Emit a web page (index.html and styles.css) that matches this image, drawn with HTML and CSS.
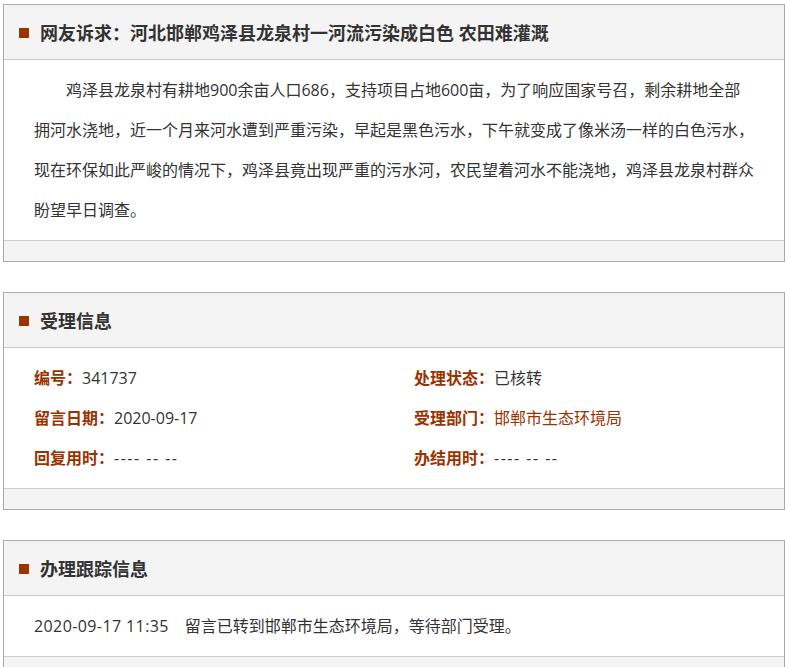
FILE: index.html
```html
<!DOCTYPE html>
<html lang="zh-CN">
<head>
<meta charset="utf-8">
<title>网友诉求</title>
<link rel="stylesheet" href="styles.css">
</head>
<body>
<div class="page">
  <section class="panel">
    <div class="panel-head"><span class="mark"></span><h2>网友诉求：河北邯郸鸡泽县龙泉村一河流污染成白色 农田难灌溉</h2></div>
    <div class="panel-body">
      <p class="content">鸡泽县龙泉村有耕地900余亩人口686，支持项目占地600亩，为了响应国家号召，剩余耕地全部拥河水浇地，近一个月来河水遭到严重污染，早起是黑色污水，下午就变成了像米汤一样的白色污水，现在环保如此严峻的情况下，鸡泽县竟出现严重的污水河，农民望着河水不能浇地，鸡泽县龙泉村群众盼望早日调查。</p>
    </div>
    <div class="panel-foot"></div>
  </section>

  <section class="panel">
    <div class="panel-head"><span class="mark"></span><h2>受理信息</h2></div>
    <div class="panel-body">
      <ul class="info">
        <li><span class="label">编号：</span>341737</li>
        <li><span class="label">处理状态：</span>已核转</li>
        <li><span class="label">留言日期：</span>2020-09-17</li>
        <li><span class="label">受理部门：</span><a class="dept" href="#">邯郸市生态环境局</a></li>
        <li><span class="label">回复用时：</span><span class="empty">---- -- --</span></li>
        <li><span class="label">办结用时：</span><span class="empty">---- -- --</span></li>
      </ul>
    </div>
    <div class="panel-foot"></div>
  </section>

  <section class="panel">
    <div class="panel-head"><span class="mark"></span><h2>办理跟踪信息</h2></div>
    <div class="panel-body">
      <div class="track"><span class="time">2020-09-17 11:35</span>留言已转到邯郸市生态环境局，等待部门受理。</div>
    </div>
    <div class="panel-foot"></div>
  </section>
</div>
</body>
</html>
```

FILE: styles.css
```css
* {
  box-sizing: border-box;
}

html, body {
  margin: 0;
  padding: 0;
  background: #fff;
}

body {
  font-family: "Open Sans", "Noto Sans CJK SC", sans-serif;
  font-size: 16px;
  color: #333;
}

.page {
  width: 782px;
  margin: 4px 0 0 3px;
  display: flex;
  flex-direction: column;
  gap: 30px;
}

.panel {
  border: 1px solid #aaa;
  background: #fff;
}

.panel-head {
  height: 55px;
  background: #f4f4f4;
  border-bottom: 1px solid #ccc;
  display: flex;
  align-items: center;
  padding-left: 15px;
  padding-top: 1px;
}

.mark {
  width: 10px;
  height: 10px;
  background: #993300;
  margin-right: 11px;
  flex: none;
}

.panel-head h2 {
  margin: 0;
  font-size: 18px;
  font-weight: bold;
  color: #333;
  line-height: 24px;
}

.panel-body {
  padding: 10px 28px 10px 30px;
}

.content {
  margin: 0;
  width: 721px;
  line-height: 40px;
  text-indent: 2em;
}

.info {
  list-style: none;
  margin: 0;
  padding: 0;
  display: grid;
  grid-template-columns: 380px 1fr;
}

.info li {
  line-height: 40px;
  white-space: nowrap;
}

.label {
  color: #993300;
  font-weight: bold;
}

.dept {
  color: #993300;
  text-decoration: none;
}

.empty {
  letter-spacing: 1.5px;
}

.track {
  line-height: 40px;
}

.time {
  margin-right: 16px;
  letter-spacing: 0.4px;
}

.panel-foot {
  height: 21px;
  background: #f4f4f4;
  border-top: 1px solid #ccc;
}
```
